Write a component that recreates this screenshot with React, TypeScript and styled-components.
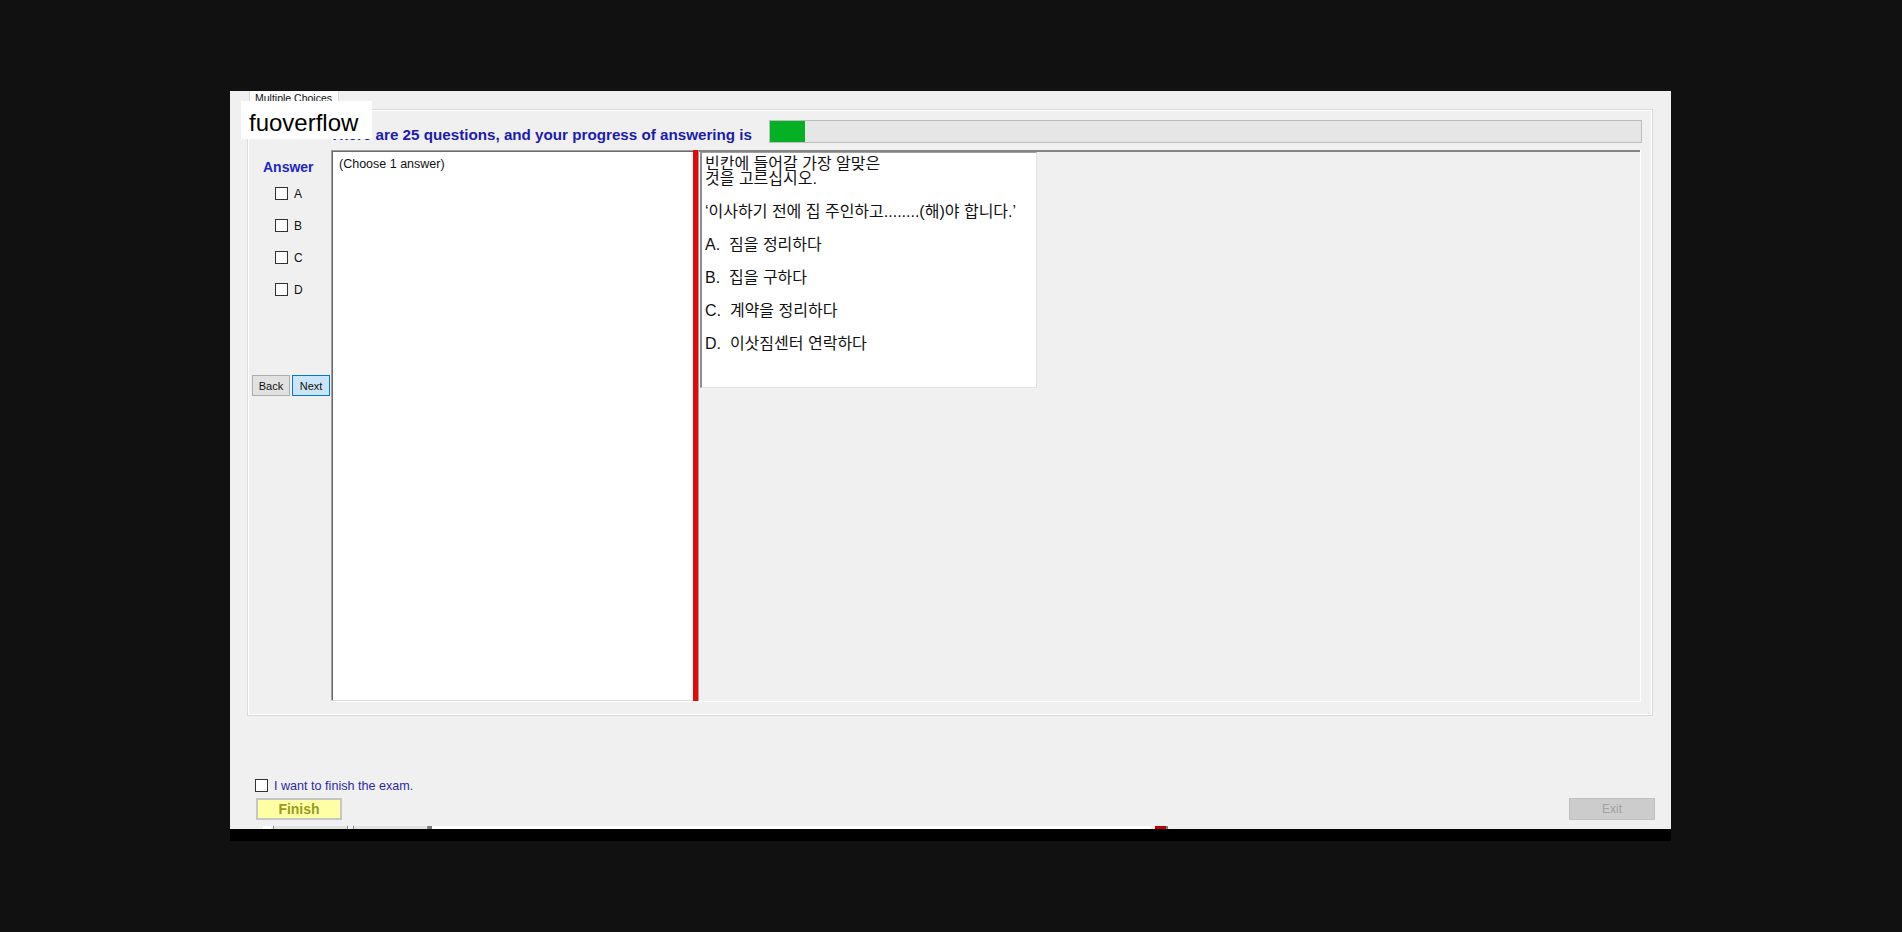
import React from "react";
import styled, { createGlobalStyle } from "styled-components";

const GlobalStyle = createGlobalStyle`
  html, body {
    margin: 0;
    background: #111111;
  }
  body {
    font-family: "Liberation Sans", Arial, sans-serif;
  }
`;

const TOTAL = 25;
const ANSWERED = 1;
const LETTERS = ["A", "B", "C", "D"];
const OPTIONS = [
  { key: "A", text: "짐을 정리하다" },
  { key: "B", text: "집을 구하다" },
  { key: "C", text: "계약을 정리하다" },
  { key: "D", text: "이삿짐센터 연락하다" },
];
const STRIP = [
  { w: 8, bg: "#ffffff", gap: 8 },
  { w: 75, bg: "#e1e1e1", gap: 2, edged: true },
  { w: 75, bg: "#e1e1e1", gap: 5, edged: true },
  { w: 4, bg: "#7a7a7a", gap: 0 },
  { w: 719, bg: "#ffffff", gap: 0 },
  { w: 11, bg: "#c40000", gap: 4 },
  { w: 2, bg: "#808080", gap: 0 },
];

const App: React.FC = () => {
  return (
    <>
      <GlobalStyle />
      <Screen>
        <Window>
          <Watermark>fuoverflow</Watermark>
          <TabStrip>
            <Tab>Multiple Choices</Tab>
          </TabStrip>
          <TabPage>
            <Header>
              <Title>There are 25 questions, and your progress of answering is</Title>
              <Progress>
                <ProgressFill style={{ width: `${(ANSWERED / TOTAL) * 100}%` }} />
              </Progress>
            </Header>
            <Body>
              <AnswerColumn>
                <AnswerTitle>Answer</AnswerTitle>
                <ChoiceList>
                  {LETTERS.map((l) => (
                    <ChoiceRow key={l}>
                      <Box />
                      <ChoiceLetter>{l}</ChoiceLetter>
                    </ChoiceRow>
                  ))}
                </ChoiceList>
                <NavRow>
                  <NavButton>Back</NavButton>
                  <NavButton $active>Next</NavButton>
                </NavRow>
              </AnswerColumn>
              <Panel>
                <AnswerBox>(Choose 1 answer)</AnswerBox>
                <Splitter />
                <QuestionArea>
                  <QuestionBox>
                    <Prompt>
                      빈칸에 들어갈 가장 알맞은
                      <br />
                      것을 고르십시오.
                    </Prompt>
                    <QuestionLine>‘이사하기 전에 집 주인하고........(해)야 합니다.’</QuestionLine>
                    {OPTIONS.map((o) => (
                      <QuestionLine key={o.key}>{`${o.key}.  ${o.text}`}</QuestionLine>
                    ))}
                  </QuestionBox>
                </QuestionArea>
              </Panel>
            </Body>
          </TabPage>
          <Footer>
            <Controls>
              <FinishGroup>
                <FinishCheck>
                  <Box />
                  <FinishLabel>I want to finish the exam.</FinishLabel>
                </FinishCheck>
                <FinishButton>Finish</FinishButton>
              </FinishGroup>
              <ExitButton disabled>Exit</ExitButton>
            </Controls>
            <StatusStrip>
              {STRIP.map((s, i) => (
                <StripCell key={i} $w={s.w} $bg={s.bg} $gap={s.gap} $edged={!!s.edged} />
              ))}
            </StatusStrip>
          </Footer>
        </Window>
        <WindowShadow />
      </Screen>
    </>
  );
};

const Screen = styled.div`
  padding: 91px 0 0 230px;
`;
const Window = styled.div`
  position: relative;
  width: 1441px;
  height: 738px;
  box-sizing: border-box;
  padding: 0 18px 0 17px;
  background: #f0f0f0;
  display: flex;
  flex-direction: column;
`;
const WindowShadow = styled.div`
  width: 1441px;
  height: 12px;
  background: #000000;
`;
const Watermark = styled.div`
  position: absolute;
  left: 11px;
  top: 10px;
  width: 131px;
  height: 38px;
  box-sizing: border-box;
  padding: 5px 0 0 8px;
  background: #ffffff;
  color: #000000;
  font-size: 24px;
  line-height: 33px;
  z-index: 2;
`;
const TabStrip = styled.div`
  height: 18px;
  display: flex;
  padding-left: 2px;
`;
const Tab = styled.div`
  width: 90px;
  height: 18px;
  box-sizing: border-box;
  padding: 1px 0 0 5px;
  border: 1px solid #d9d9d9;
  border-bottom: none;
  border-top: none;
  background: #fbfbfb;
  font-size: 10.5px;
  line-height: 12px;
  color: #111;
  white-space: nowrap;
`;
const TabPage = styled.div`
  height: 607px;
  box-sizing: border-box;
  border: 1px solid #dadada;
  box-shadow: inset 0 0 0 1px #ffffff;
  display: flex;
  flex-direction: column;
`;
const Header = styled.div`
  height: 40px;
  display: flex;
  align-items: flex-start;
  padding-left: 82px;
`;
const Title = styled.div`
  margin-top: 16px;
  font-size: 15.2px;
  line-height: 18px;
  font-weight: bold;
  color: #1c1cae;
  white-space: nowrap;
`;
const Progress = styled.div`
  width: 873px;
  height: 23px;
  box-sizing: border-box;
  margin: 10px 10px 0 auto;
  border: 1px solid #bcbcbc;
  background: #e6e6e6;
  display: flex;
`;
const ProgressFill = styled.div`
  height: 100%;
  background: #06b025;
`;
const Body = styled.div`
  height: 552px;
  display: flex;
  margin-right: 11px;
`;
const AnswerColumn = styled.div`
  width: 83px;
  display: flex;
  flex-direction: column;
  padding-top: 9px;
`;
const AnswerTitle = styled.div`
  margin-left: 15px;
  font-size: 14px;
  line-height: 16px;
  font-weight: bold;
  color: #1f26c6;
`;
const ChoiceList = styled.div`
  margin: 12px 0 0 27px;
  display: flex;
  flex-direction: column;
  gap: 19px;
`;
const ChoiceRow = styled.div`
  height: 13px;
  display: flex;
  align-items: center;
  gap: 6px;
`;
const Box = styled.span`
  width: 13px;
  height: 13px;
  box-sizing: border-box;
  border: 1px solid #333333;
  background: #ffffff;
  flex-shrink: 0;
`;
const ChoiceLetter = styled.span`
  font-size: 12px;
  color: #111;
`;
const NavRow = styled.div`
  margin: 79px 0 0 4px;
  display: flex;
  gap: 2px;
`;
const NavButton = styled.button<{ $active?: boolean }>`
  width: 38px;
  height: 21px;
  padding: 0;
  border: 1px solid ${(p) => (p.$active ? "#0078d7" : "#adadad")};
  background: ${(p) => (p.$active ? "#cce4f7" : "#e1e1e1")};
  font-family: "Liberation Sans", Arial, sans-serif;
  font-size: 11px;
  color: #111;
`;
const Panel = styled.div`
  flex: 1;
  display: flex;
  border-right: 1px solid #ffffff;
  border-bottom: 1px solid #ffffff;
`;
const AnswerBox = styled.div`
  width: 362px;
  box-sizing: border-box;
  padding: 6px 0 0 7px;
  background: #ffffff;
  border-top: 1px solid #a0a0a0;
  border-left: 1px solid #a0a0a0;
  border-bottom: 1px solid #dcdcdc;
  box-shadow: inset 1px 1px 0 #696969;
  font-size: 12.5px;
  line-height: 14px;
  color: #111;
`;
const Splitter = styled.div`
  width: 5px;
  background: #e30a0a;
  border-right: 1px solid #a0a0a0;
`;
const QuestionArea = styled.div`
  flex: 1;
  padding-left: 1px;
  border-top: 2px solid #858585;
`;
const QuestionBox = styled.div`
  width: 337px;
  height: 236px;
  box-sizing: border-box;
  padding: 3px 0 0 3px;
  background: #ffffff;
  border-left: 2px solid #8d8d8d;
  border-top: 1px solid #a0a0a0;
  border-right: 1px solid #e3e3e3;
  border-bottom: 1px solid #e3e3e3;
  font-family: "Liberation Sans", "Noto Sans CJK KR", sans-serif;
  font-size: 16px;
  color: #111;
`;
const Prompt = styled.div`
  line-height: 15px;
`;
const QuestionLine = styled.div`
  margin-top: 17px;
  line-height: 16px;
  white-space: pre;
  &:nth-child(2) {
    margin-top: 18px;
  }
`;
const Footer = styled.div`
  flex: 1;
  display: flex;
  flex-direction: column;
  justify-content: flex-end;
  padding-left: 8px;
  margin-right: -2px;
`;
const Controls = styled.div`
  display: flex;
  justify-content: space-between;
  align-items: flex-end;
`;
const FinishGroup = styled.div`
  display: flex;
  flex-direction: column;
  gap: 6px;
`;
const FinishCheck = styled.div`
  height: 13px;
  display: flex;
  align-items: center;
  gap: 6px;
`;
const FinishLabel = styled.span`
  font-size: 12.6px;
  color: #2b2ba8;
  white-space: nowrap;
`;
const FinishButton = styled.button`
  width: 86px;
  height: 22px;
  margin-left: 1px;
  padding: 0;
  border: 2px solid #c6c6c6;
  background: #ffffa6;
  font-family: "Liberation Sans", Arial, sans-serif;
  font-size: 14px;
  font-weight: bold;
  color: #9a9a22;
`;
const ExitButton = styled.button`
  width: 86px;
  height: 22px;
  padding: 0;
  border: 1px solid #bfbfbf;
  background: #cccccc;
  font-family: "Liberation Sans", Arial, sans-serif;
  font-size: 12px;
  color: #a2a2a2;
`;
const StatusStrip = styled.div`
  margin-top: 6px;
  height: 3px;
  display: flex;
  overflow: hidden;
`;
const StripCell = styled.div<{ $w: number; $bg: string; $gap: number; $edged: boolean }>`
  width: ${(p) => p.$w}px;
  margin-left: ${(p) => p.$gap}px;
  box-sizing: border-box;
  background: ${(p) => p.$bg};
  border-left: ${(p) => (p.$edged ? "1px solid #8a8a8a" : "none")};
  border-right: ${(p) => (p.$edged ? "1px solid #8a8a8a" : "none")};
`;

export default App;
